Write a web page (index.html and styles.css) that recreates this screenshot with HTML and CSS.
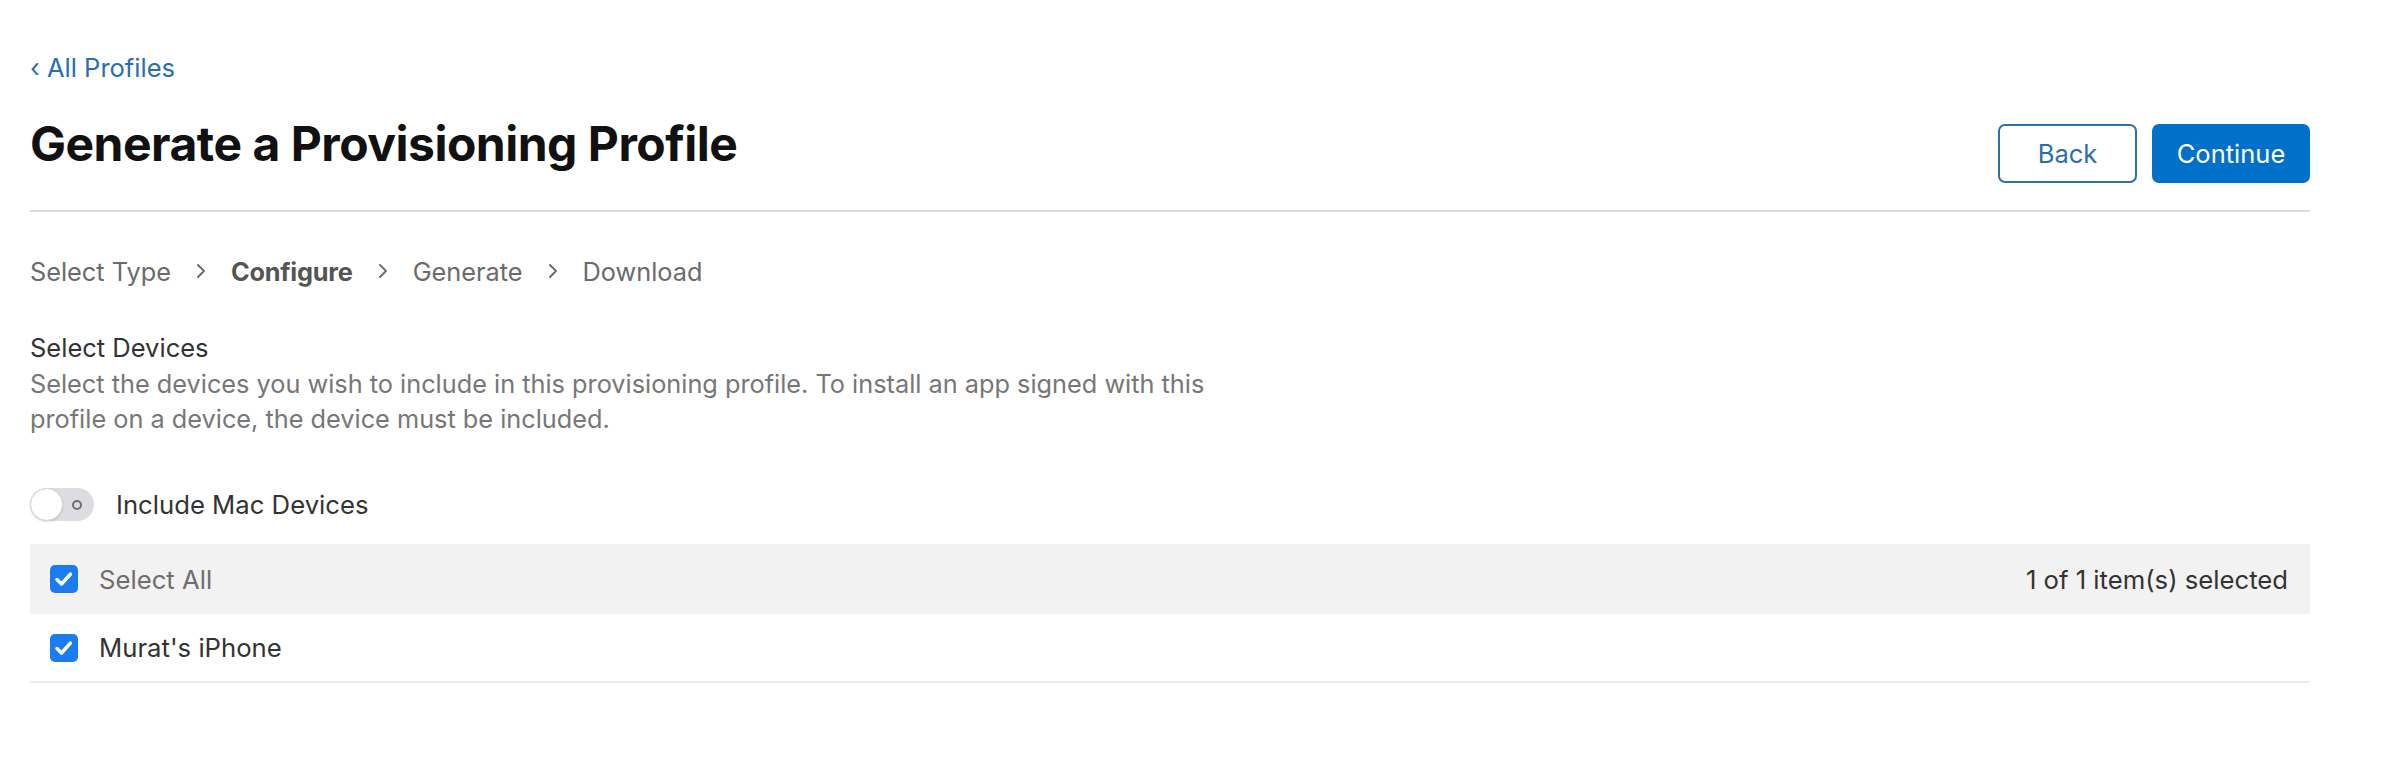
FILE: index.html
```html
<!DOCTYPE html>
<html lang="en">
<head>
<meta charset="utf-8">
<title>Generate a Provisioning Profile</title>
<link rel="stylesheet" href="styles.css">
</head>
<body>
<div class="page">
  <a class="back-link" href="#"><span class="back-chev">‹</span> All Profiles</a>
  <header class="header">
    <h1 class="title">Generate a Provisioning Profile</h1>
    <div class="actions">
      <button class="btn btn-secondary">Back</button>
      <button class="btn btn-primary">Continue</button>
    </div>
  </header>

  <nav class="steps">
    <span class="step">Select Type</span>
    <svg class="chev" viewBox="0 0 10 16" width="10" height="16"><path d="M2 2l6 6-6 6" fill="none" stroke="#6e6e6e" stroke-width="2" stroke-linecap="round" stroke-linejoin="round"/></svg>
    <span class="step step-current">Configure</span>
    <svg class="chev" viewBox="0 0 10 16" width="10" height="16"><path d="M2 2l6 6-6 6" fill="none" stroke="#6e6e6e" stroke-width="2" stroke-linecap="round" stroke-linejoin="round"/></svg>
    <span class="step">Generate</span>
    <svg class="chev" viewBox="0 0 10 16" width="10" height="16"><path d="M2 2l6 6-6 6" fill="none" stroke="#6e6e6e" stroke-width="2" stroke-linecap="round" stroke-linejoin="round"/></svg>
    <span class="step">Download</span>
  </nav>

  <section class="section">
    <h2 class="section-title">Select Devices</h2>
    <p class="section-desc">Select the devices you wish to include in this provisioning profile. To install an app signed with this profile on a device, the device must be included.</p>
  </section>

  <div class="toggle-row">
    <span class="toggle"><span class="toggle-knob"></span><span class="toggle-off"></span></span>
    <span class="toggle-label">Include Mac Devices</span>
  </div>

  <div class="table">
    <div class="table-row table-head">
      <span class="checkbox"><svg viewBox="0 0 28 28" width="28" height="28"><path d="M7 14.5l4.5 4.5 9-10" fill="none" stroke="#fff" stroke-width="3.4" stroke-linecap="round" stroke-linejoin="round"/></svg></span>
      <span class="select-all">Select All</span>
      <span class="count">1 of 1 item(s) selected</span>
    </div>
    <div class="table-row table-item">
      <span class="checkbox"><svg viewBox="0 0 28 28" width="28" height="28"><path d="M7 14.5l4.5 4.5 9-10" fill="none" stroke="#fff" stroke-width="3.4" stroke-linecap="round" stroke-linejoin="round"/></svg></span>
      <span class="device">Murat's iPhone</span>
    </div>
  </div>
</div>
</body>
</html>
```

FILE: styles.css
```css
* { box-sizing: border-box; }
html, body { margin: 0; padding: 0; background: #fff; }
body {
  font-family: "Inter", "Liberation Sans", sans-serif;
  color: #333;
}
.page {
  width: 2310px;
  padding: 50px 0 0 30px;
}
.back-link {
  display: block;
  font-size: 25.5px;
  line-height: 36px;
  height: 36px;
  color: #2a6eb0;
  text-decoration: none;
}
.back-chev { font-size: 25.5px; }
.header {
  display: flex;
  justify-content: space-between;
  align-items: flex-start;
  padding-bottom: 27px;
  border-bottom: 2px solid #dcdcdc;
}
.title {
  margin: 29px 0 0;
  font-size: 48px;
  line-height: 58px;
  font-weight: 700;
  color: #111;
  letter-spacing: -0.5px;
}
.actions {
  display: flex;
  gap: 15px;
  margin-top: 38px;
}
.btn {
  height: 59px;
  border-radius: 7px;
  font-family: inherit;
  font-size: 25.5px;
  padding: 0;
  cursor: pointer;
}
.btn-secondary {
  width: 139px;
  background: #fff;
  border: 2px solid #2f6fad;
  color: #2a6eb0;
}
.btn-primary {
  width: 158px;
  background: #0070c9;
  border: 2px solid #0070c9;
  color: #fff;
}
.steps {
  display: flex;
  align-items: center;
  gap: 25px;
  margin-top: 41px;
  height: 36px;
  font-size: 25.3px;
  color: #6b6b6b;
}
.step-current {
  font-weight: 700;
  color: #555;
  letter-spacing: -0.2px;
}
.chev { display: block; }
.section { margin-top: 41px; }
.section-title {
  margin: 0;
  font-size: 25.5px;
  line-height: 36px;
  font-weight: 400;
  color: #333;
}
.section-desc {
  margin: 0;
  max-width: 1200px;
  font-size: 25.3px;
  line-height: 35px;
  color: #777;
}
.toggle-row {
  display: flex;
  align-items: center;
  gap: 22px;
  margin-top: 52px;
  height: 33px;
}
.toggle {
  position: relative;
  display: block;
  width: 64px;
  height: 33px;
  border-radius: 17px;
  background: #dcdce1;
}
.toggle-knob {
  position: absolute;
  left: 0;
  top: 0;
  width: 33px;
  height: 33px;
  border-radius: 50%;
  background: #fff;
  border: 1.5px solid #d4d4d8;
  box-shadow: 0 1px 2px rgba(0,0,0,0.12);
}
.toggle-off {
  position: absolute;
  left: 42px;
  top: 12px;
  width: 10px;
  height: 10px;
  border-radius: 50%;
  border: 2px solid #6e6e73;
}
.toggle-label {
  font-size: 25.7px;
  color: #333;
}
.table { margin-top: 23px; }
.table-row {
  display: flex;
  align-items: center;
  padding: 0 22px 0 20px;
  font-size: 25.7px;
}
.table-head {
  height: 70px;
  background: #f2f2f2;
}
.table-item {
  height: 69px;
  border-bottom: 2px solid #ebebeb;
}
.checkbox {
  display: block;
  width: 28px;
  height: 28px;
  border-radius: 5px;
  background: #1b7cf2;
  margin-right: 21px;
}
.checkbox svg { display: block; }
.select-all { color: #6e6e6e; }
.count { margin-left: auto; color: #333; }
.device { color: #333; }
```
